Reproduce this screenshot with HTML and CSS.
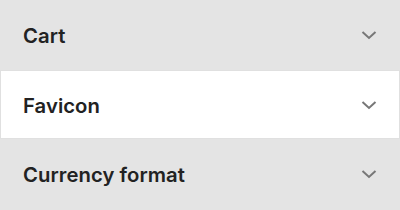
FILE: index.html
```html
<!DOCTYPE html>
<html>
<head>
<meta charset="utf-8">
<link rel="stylesheet" href="styles.css">
</head>
<body>
<div class="list">
  <div class="row">
    <span class="label">Cart</span>
    <svg class="chev" width="16" height="10" viewBox="0 0 16 10"><path d="M1.5 2 L8 8 L14.5 2" fill="none" stroke="#777" stroke-width="2"/></svg>
  </div>
  <div class="row active">
    <span class="label">Favicon</span>
    <svg class="chev" width="16" height="10" viewBox="0 0 16 10"><path d="M1.5 2 L8 8 L14.5 2" fill="none" stroke="#777" stroke-width="2"/></svg>
  </div>
  <div class="row">
    <span class="label">Currency format</span>
    <svg class="chev" width="16" height="10" viewBox="0 0 16 10"><path d="M1.5 2 L8 8 L14.5 2" fill="none" stroke="#777" stroke-width="2"/></svg>
  </div>
</div>
</body>
</html>
```
FILE: styles.css
```css
html, body {
  margin: 0;
  padding: 0;
  background: #e4e4e4;
}
.list {
  display: flex;
  flex-direction: column;
  width: 400px;
}
.row {
  display: flex;
  align-items: center;
  justify-content: space-between;
  height: 70px;
  padding: 0 23px 0 23px;
  box-sizing: border-box;
  background: #e4e4e4;
}
.row.active {
  height: 69px;
  background: #fff;
  border: 1px solid #e0e0e0;
  padding: 0 22px 0 22px;
}
.label {
  font-family: Inter, "Noto Sans", sans-serif;
  font-weight: 600;
  font-size: 20.3px;
  letter-spacing: 0.05px;
  color: #222;
  padding-top: 1px;
}
.chev {
  display: block;
  margin-top: 0;
}
```
